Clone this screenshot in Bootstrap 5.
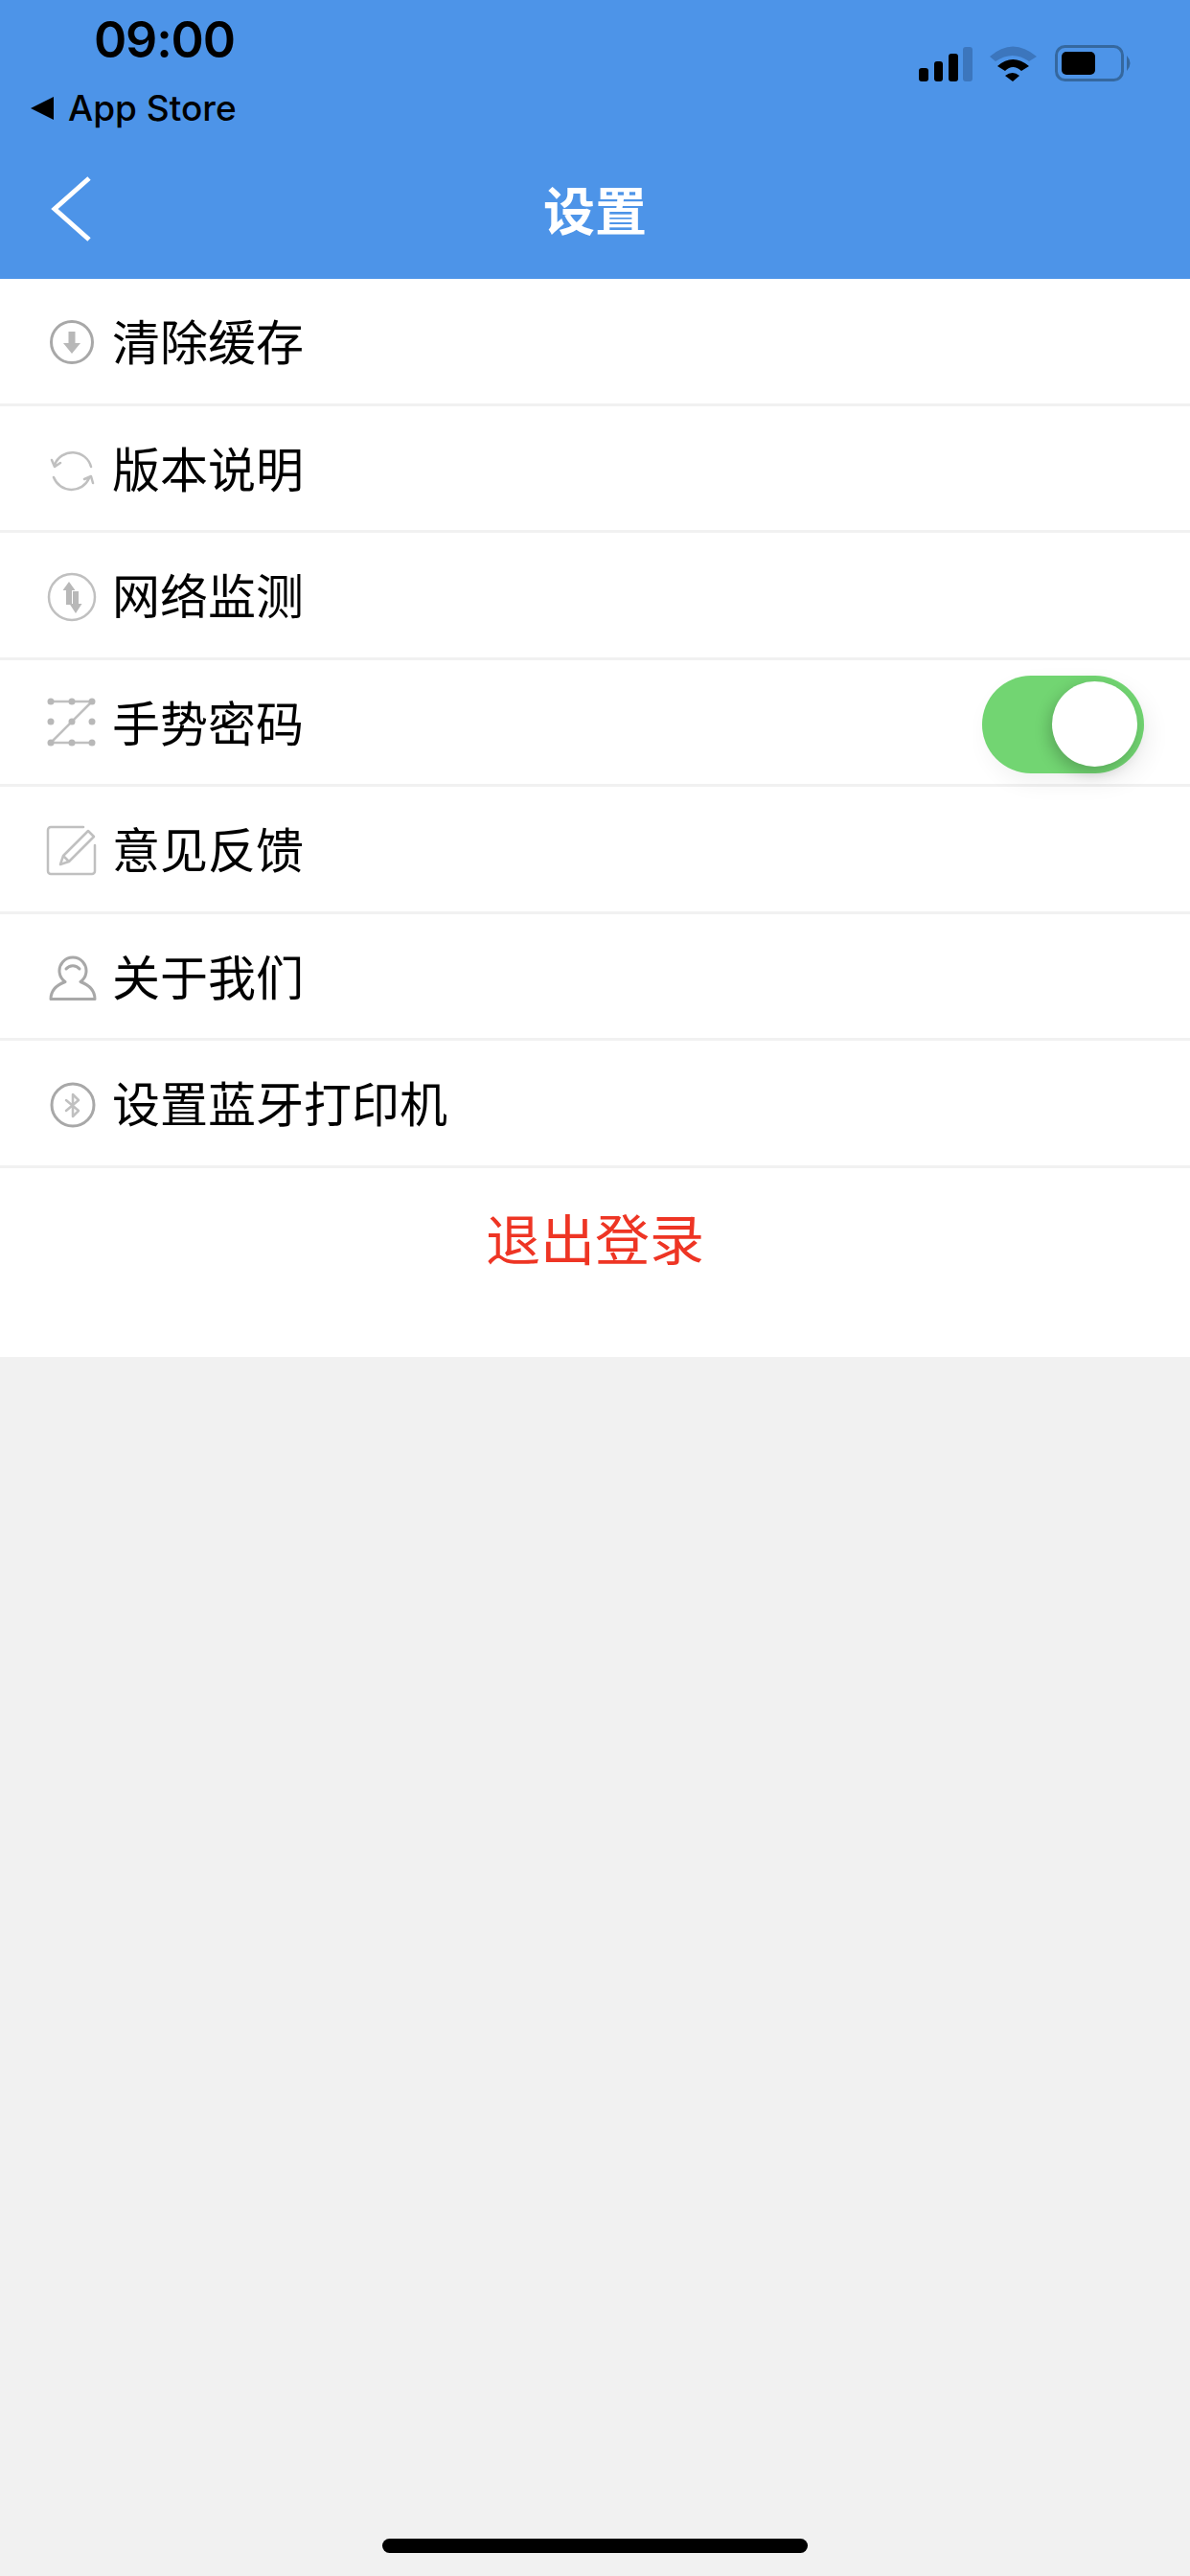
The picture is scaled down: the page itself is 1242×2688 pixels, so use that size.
<!DOCTYPE html>
<html lang="zh-CN">
<head>
    <meta charset="UTF-8">
    <meta name="viewport" content="width=device-width, initial-scale=1.0">
    <title>设置</title>
    <link href="https://cdn.jsdelivr.net/npm/bootstrap@5.3.0/dist/css/bootstrap.min.css" rel="stylesheet">
    <style>
        body { background: #f1f1f1; font-family: "Noto Sans CJK SC", "Liberation Sans", sans-serif; min-height: 2688px; }
        .app-head { background: #4d94e8; height: 291px; }
        .status-wrap { height: 150px; padding: 10px 59px 0 32px; }
        .clock { font: 600 52px/64px Inter, sans-serif; letter-spacing: -1.2px; color: #000; margin-left: 66px; }
        .back-store { font: 500 37px/46px Inter, sans-serif; color: #000; gap: 15px; margin-top: 16px; }
        .status-icons { padding-top: 37px; }
        .nav-row { height: 141px; padding-bottom: 5px; grid-template-columns: 1fr auto 1fr; }
        .nav-back { padding-left: 53px; }
        .nav-title { color: #fff; font-size: 54px; font-weight: 700; line-height: 1.2; }
        .set-row { height: 132.5px; padding: 5px 0 3.5px 45px; background: #fff; border-bottom: 3.5px solid #f1f1f1; gap: 12px; font-size: 50px; color: #000; line-height: 1.2; }
        .set-row svg { flex: none; }
        .set-label { margin-bottom: 5px; }
        .logout-row { height: 197.5px; padding-top: 29px; background: #fff; color: #ee3524; font-size: 57px; line-height: 84px; }
        .sw-track { width: 169px; height: 102px; margin: 3px 48px 0 0; padding-right: 7px; border-radius: 51px; background: #72d572; box-shadow: 6px 10px 24px rgba(0,0,0,.06); }
        .sw-knob { width: 89px; height: 89px; border-radius: 50%; background: #fff; box-shadow: -3px 6px 16px rgba(0,0,0,.22); }
        .home-wrap { padding-bottom: 24px; }
        .home-bar { width: 444px; height: 15px; border-radius: 8px; background: #000; }
        .ic-line { fill: none; stroke: #a8a8a8; stroke-width: 3; stroke-linecap: round; stroke-linejoin: round; }
        .ic-light { fill: none; stroke: #c0c0c0; stroke-width: 2.5; stroke-linecap: round; stroke-linejoin: round; }
        .ic-fill { fill: #b8b8b8; }
    </style>
</head>
<body class="d-flex flex-column">
    <!-- Header -->
    <header class="app-head">
        <div class="status-wrap d-flex justify-content-between align-items-start">
            <div>
                <div class="clock">09:00</div>
                <div class="back-store d-flex align-items-center">
                    <svg width="24" height="24" viewBox="0 0 24 24"><path d="M24 0V24L0 12Z" fill="#000"/></svg>
                    <span>App Store</span>
                </div>
            </div>
            <div class="status-icons d-flex align-items-start">
                <svg width="56" height="38" viewBox="0 0 56 38">
                    <rect x="0" y="24" width="10" height="14" rx="3" fill="#000"/>
                    <rect x="16" y="17" width="9" height="21" rx="3" fill="#000"/>
                    <rect x="31" y="9" width="10" height="29" rx="3" fill="#000"/>
                    <rect x="46" y="2" width="10" height="36" rx="3" fill="#3c76bd"/>
                </svg>
                <svg class="ms-3" width="54" height="40" viewBox="0 0 54 40">
                    <path d="M2 12Q26-9 51 12L43 17Q26 5 8 17Z" fill="#3c76bd"/>
                    <path d="M10 22Q26 8 43 22L35 27Q26 19 18 27Z" fill="#000"/>
                    <path d="M18 32Q26 26 33 32L26 38Z" fill="#000"/>
                </svg>
                <svg class="ms-3" width="82" height="38" viewBox="0 0 82 38">
                    <rect x="1.5" y="1.5" width="69" height="35" rx="9" fill="none" stroke="#35689f" stroke-width="3"/>
                    <rect x="7" y="7" width="35" height="24" rx="5" fill="#000"/>
                    <path d="M75 11Q82 19 75 27Z" fill="#35689f"/>
                </svg>
            </div>
        </div>
        <div class="nav-row d-grid align-items-center">
            <div class="nav-back d-flex">
                <svg width="42" height="68" viewBox="0 0 42 68"><path d="M40 2L4 34L40 66" fill="none" stroke="#fff" stroke-width="5"/></svg>
            </div>
            <div class="nav-title">设置</div>
            <div></div>
        </div>
    </header>

    <!-- Settings list -->
    <div>
        <div class="set-row d-flex align-items-center">
            <svg width="60" height="60" viewBox="0 0 60 60">
                <circle class="ic-line" cx="30" cy="30" r="21.5"/>
                <path class="ic-fill" d="M26.5 19h7v12h5.5l-9 11-9-11h5.5z"/>
            </svg>
            <span class="set-label">清除缓存</span>
        </div>
        <div class="set-row d-flex align-items-center">
            <svg width="60" height="60" viewBox="0 0 60 60">
                <path class="ic-light" d="M12 26A20 20 0 0 1 50 28M9 21l3 7 6-4M11 39A20 20 0 0 0 48 40M52 45l-2-7-7 3"/>
            </svg>
            <span class="set-label">版本说明</span>
        </div>
        <div class="set-row d-flex align-items-center">
            <svg width="60" height="60" viewBox="0 0 60 60">
                <circle class="ic-light" cx="30" cy="31" r="24"/>
                <path class="ic-fill" d="M27 15l6.500 9h-3.500v15h-6v-15h-3.500zM31 25h6v13h3.500l-6.500 10-6.500-10h3.500z"/>
            </svg>
            <span class="set-label">网络监测</span>
        </div>
        <div class="set-row d-flex align-items-center">
            <svg width="60" height="60" viewBox="0 0 60 60">
                <path class="ic-light" d="M8 8H51L8 51H51"/>
                <g class="ic-fill">
                    <circle cx="8" cy="8" r="3.500"/><circle cx="30" cy="8" r="3.500"/><circle cx="51" cy="8" r="3.500"/>
                    <circle cx="8" cy="29" r="3.500"/><circle cx="30" cy="29" r="3.500"/><circle cx="51" cy="29" r="3.500"/>
                    <circle cx="8" cy="51" r="3.500"/><circle cx="30" cy="51" r="3.500"/><circle cx="51" cy="51" r="3.500"/>
                </g>
            </svg>
            <span class="set-label">手势密码</span>
            <div class="sw-track d-flex justify-content-end align-items-center ms-auto">
                <div class="sw-knob"></div>
            </div>
        </div>
        <div class="set-row d-flex align-items-center">
            <svg width="60" height="60" viewBox="0 0 60 60">
                <path class="ic-light" d="M42 6H8a3 3 0 0 0-3 3V52a3 3 0 0 0 3 3H51a3 3 0 0 0 3-3V25"/>
                <path class="ic-light" d="M18 45l3-9L47 10l6 6L27 42zM21 36l6 6"/>
            </svg>
            <span class="set-label">意见反馈</span>
        </div>
        <div class="set-row d-flex align-items-center">
            <svg width="60" height="60" viewBox="0 0 60 60">
                <path class="ic-line" d="M8 53.500c0-9 7-15 15-18a14 14 0 1 1 16 0c8 3 15 9 15 18z"/>
                <path class="ic-line" d="M24 22a9 9 0 0 1 14 0"/>
            </svg>
            <span class="set-label">关于我们</span>
        </div>
        <div class="set-row d-flex align-items-center">
            <svg width="60" height="60" viewBox="0 0 60 60">
                <circle class="ic-line" cx="31" cy="31" r="22"/>
                <path class="ic-light" d="M24 26L37 37L31 43V20L37 26L24 37"/>
            </svg>
            <span class="set-label">设置蓝牙打印机</span>
        </div>
        <div class="logout-row text-center">退出登录</div>
    </div>

    <!-- Home indicator -->
    <div class="home-wrap mt-auto d-flex justify-content-center">
        <div class="home-bar"></div>
    </div>

    <script src="https://cdn.jsdelivr.net/npm/bootstrap@5.3.0/dist/js/bootstrap.bundle.min.js"></script>
</body>
</html>
